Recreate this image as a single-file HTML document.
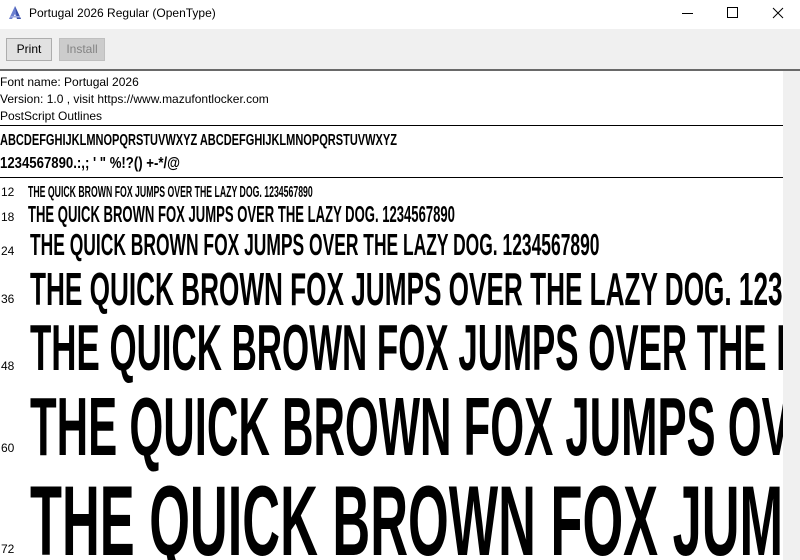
<!DOCTYPE html>
<html><head><meta charset="utf-8"><style>
html,body{margin:0;padding:0;width:800px;height:560px;overflow:hidden;background:#fff;font-family:"Liberation Sans",sans-serif;}
.abs{position:absolute}
.ui{font-size:12px;color:#000}
.btn{position:absolute;top:38px;height:23px;box-sizing:border-box;font-size:12px;line-height:21px;text-align:center}
</style></head><body>
<div class="abs" style="left:0;top:0;width:800px;height:29px;background:#fff"></div>
<svg class="abs" style="left:7px;top:5px" width="16" height="16" viewBox="0 0 16 16"><path d="M8 1 L14 14 L10 14 L8 9 L5 14 L2 14 Z" fill="#6b7fd0"/><path d="M8 1 L14 14 L10 14 Z" fill="#3a4fa8"/><rect x="3" y="11" width="10" height="1.5" fill="#9aa6e0"/></svg>
<div class="abs ui" style="left:29px;top:6px">Portugal 2026 Regular (OpenType)</div>
<svg class="abs" style="left:680px;top:5px" width="110" height="16"><line x1="2" y1="8.5" x2="13" y2="8.5" stroke="#000"/><rect x="47.5" y="2.5" width="10" height="10" fill="none" stroke="#000"/><path d="M93 3 L103 13 M103 3 L93 13" stroke="#000"/></svg>
<div class="abs" style="left:0;top:29px;width:800px;height:41px;background:#f0f0f0"></div>
<div class="btn" style="left:6px;width:46px;background:#e1e1e1;border:1px solid #adadad">Print</div>
<div class="btn" style="left:59px;width:46px;background:#cccccc;border:1px solid #bfbfbf;color:#838383">Install</div>
<div class="abs" style="left:0;top:69px;width:800px;height:2px;background:#696969"></div>
<div class="abs" style="left:783px;top:71px;width:17px;height:489px;background:#f0f0f0"></div>
<div class="abs ui" style="left:0;top:74px;line-height:17px">Font name: Portugal 2026<br>Version: 1.0 , visit https://www.mazufontlocker.com<br>PostScript Outlines</div>
<div class="abs" style="left:0;top:125px;width:783px;height:1px;background:#000"></div>
<div class="abs" style="left:0;top:177px;width:783px;height:1px;background:#000"></div>
<svg class="abs" style="left:0;top:0" width="783" height="560" font-family="Liberation Sans, sans-serif" font-weight="bold">
<text x="0" y="145" font-size="12" textLength="397" lengthAdjust="spacingAndGlyphs" transform="translate(0,-40.6) scale(1,1.28)" >ABCDEFGHIJKLMNOPQRSTUVWXYZ ABCDEFGHIJKLMNOPQRSTUVWXYZ</text>
<text x="0" y="168" font-size="12" textLength="180" lengthAdjust="spacingAndGlyphs" transform="translate(0,-47) scale(1,1.28)">1234567890.:,; ' " %!?() +-*/@</text>
<g font-weight="normal" font-size="12" fill="#000"><text x="1" y="196">12</text><text x="1" y="221">18</text><text x="1" y="255">24</text><text x="1" y="303">36</text><text x="1" y="370">48</text><text x="1" y="452">60</text><text x="1" y="553">72</text></g>
<text transform="translate(28,197) scale(0.727,1.28)" font-size="12">THE QUICK BROWN FOX JUMPS OVER THE LAZY DOG. 1234567890</text>
<text transform="translate(28,222) scale(0.727,1.28)" font-size="18">THE QUICK BROWN FOX JUMPS OVER THE LAZY DOG. 1234567890</text>
<text transform="translate(30,255) scale(0.727,1.28)" font-size="24">THE QUICK BROWN FOX JUMPS OVER THE LAZY DOG. 1234567890</text>
<text transform="translate(30,305) scale(0.727,1.3)" font-size="36">THE QUICK BROWN FOX JUMPS OVER THE LAZY DOG. 1234567890</text>
<text transform="translate(30,370) scale(0.727,1.35)" font-size="48">THE QUICK BROWN FOX JUMPS OVER THE LAZY DOG. 1234567890</text>
<text transform="translate(30,455) scale(0.727,1.38)" font-size="60">THE QUICK BROWN FOX JUMPS OVER THE LAZY DOG. 1234567890</text>
<text transform="translate(30,555) scale(0.727,1.38)" font-size="72">THE QUICK BROWN FOX JUMPS OVER THE LAZY DOG. 1234567890</text>
</svg>
</body></html>
